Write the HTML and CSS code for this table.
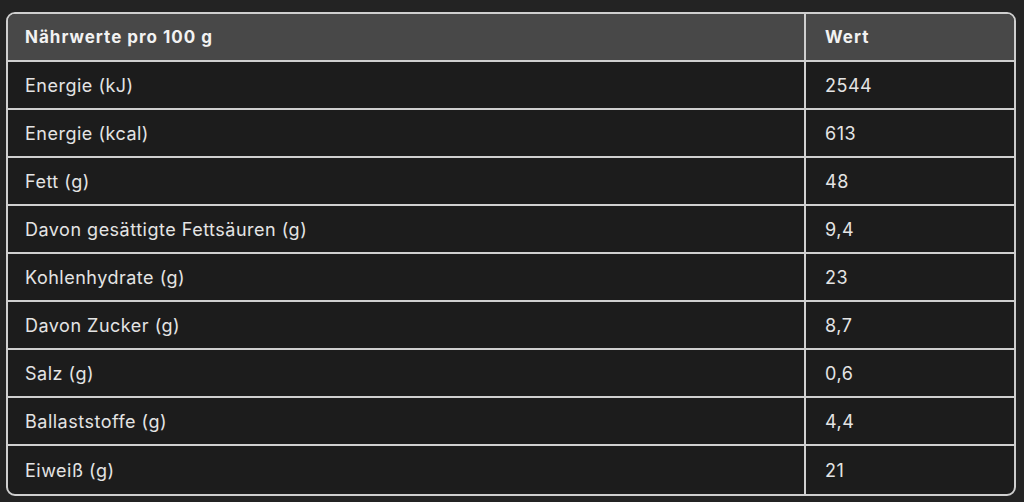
FILE: index.html
```html
<!DOCTYPE html>
<html lang="de">
<head>
<meta charset="utf-8">
<link rel="stylesheet" href="styles.css">
</head>
<body>
<div class="wrap">
<table class="nt">
<thead>
<tr><th>Nährwerte pro 100 g</th><th>Wert</th></tr>
</thead>
<tbody>
<tr><td>Energie (kJ)</td><td>2544</td></tr>
<tr><td>Energie (kcal)</td><td>613</td></tr>
<tr><td>Fett (g)</td><td>48</td></tr>
<tr><td>Davon gesättigte Fettsäuren (g)</td><td>9,4</td></tr>
<tr><td>Kohlenhydrate (g)</td><td>23</td></tr>
<tr><td>Davon Zucker (g)</td><td>8,7</td></tr>
<tr><td>Salz (g)</td><td>0,6</td></tr>
<tr><td>Ballaststoffe (g)</td><td>4,4</td></tr>
<tr><td>Eiweiß (g)</td><td>21</td></tr>
</tbody>
</table>
</div>
</body>
</html>
```
FILE: styles.css
```css
html, body {
  margin: 0;
  padding: 0;
  background: #232323;
  height: 100%;
}
body {
  font-family: Inter, "Liberation Sans", sans-serif;
  color: #e4e4e4;
}
.wrap {
  padding: 12px 8px 0 6px;
}
.nt {
  width: 1010px;
  border-collapse: separate;
  border-spacing: 0;
  border: 2px solid #cfcfcf;
  border-radius: 9px;
  overflow: hidden;
  font-size: 18px;
  background: #1c1c1c;
}
.nt th, .nt td {
  height: 48px;
  padding: 0 0 0 19px;
  text-align: left;
  border-bottom: 2px solid #cfcfcf;
  box-sizing: border-box;
  letter-spacing: 0.5px;
}
.nt th {
  background: #484848;
  font-weight: 700;
  font-size: 17px;
  letter-spacing: 1px;
  color: #f2f2f2;
}
.nt th:first-child, .nt td:first-child {
  width: 798px;
  padding-left: 17px;
  border-right: 2px solid #cfcfcf;
}
.nt tbody tr:last-child td {
  border-bottom: none;
}
.nt td {
  font-weight: 400;
}
```
